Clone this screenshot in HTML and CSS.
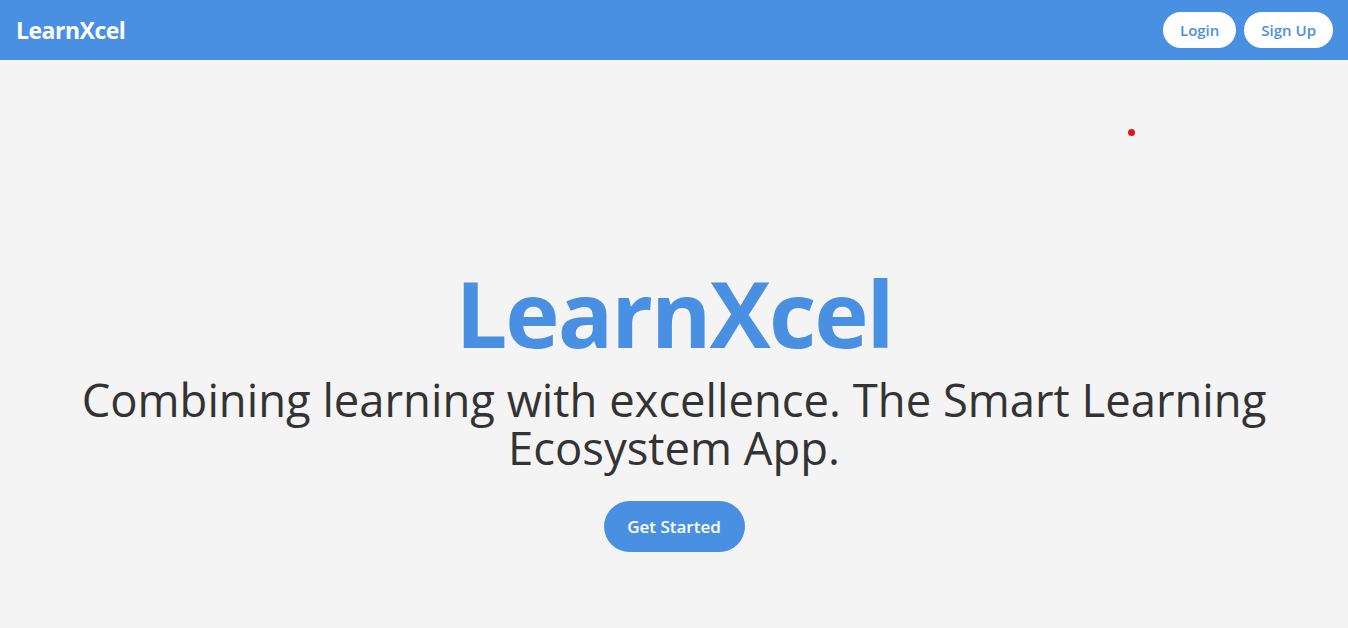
FILE: index.html
```html
<!DOCTYPE html>
<html lang="en">
<head>
<meta charset="utf-8">
<title>LearnXcel</title>
<link rel="stylesheet" href="styles.css">
</head>
<body>
<header class="navbar">
  <div class="brand">LearnXcel</div>
  <nav class="nav-actions">
    <button class="pill-btn">Login</button>
    <button class="pill-btn">Sign Up</button>
  </nav>
</header>
<main class="hero">
  <span class="cursor-dot"></span>
  <h1 class="hero-title">LearnXcel</h1>
  <p class="hero-sub">Combining learning with excellence. The Smart Learning Ecosystem App.</p>
  <button class="cta-btn">Get Started</button>
</main>
</body>
</html>
```
FILE: styles.css
```css
* { box-sizing: border-box; }
html, body { margin: 0; padding: 0; }
body {
  background: #f4f4f4;
  font-family: "Open Sans", "Noto Sans", sans-serif;
  color: #333;
  height: 628px;
  overflow: hidden;
}
.navbar {
  height: 60px;
  background: #4a90e2;
  display: flex;
  align-items: center;
  justify-content: space-between;
  padding: 0 15px 0 16px;
}
.brand {
  color: #fff;
  font-weight: 700;
  font-size: 23px;
  letter-spacing: -0.5px;
}
.nav-actions {
  display: flex;
  gap: 8px;
}
.pill-btn {
  font-family: inherit;
  background: #fff;
  color: #4a90e2;
  border: none;
  border-radius: 18px;
  height: 36px;
  padding: 0 17px;
  font-size: 15px;
  font-weight: 600;
}
.hero {
  position: relative;
  display: flex;
  flex-direction: column;
  align-items: center;
  text-align: center;
  padding: 203px 70px 0;
}
.cursor-dot {
  position: absolute;
  left: 1128px;
  top: 69px;
  width: 7px;
  height: 7px;
  border-radius: 50%;
  background: #e3161b;
}
.hero-title {
  margin: 0;
  font-size: 92px;
  font-weight: 700;
  line-height: 100px;
  color: #4a90e2;
  letter-spacing: -2px;
}
.hero-sub {
  margin: 12px 0 0;
  font-size: 45.4px;
  line-height: 48px;
  font-weight: 400;
  max-width: 1220px;
}
.cta-btn {
  margin-top: 30px;
  font-family: inherit;
  background: #4a90e2;
  color: #fff;
  border: none;
  border-radius: 26px;
  width: 141px;
  height: 51px;
  font-size: 17px;
  font-weight: 600;
}
```
